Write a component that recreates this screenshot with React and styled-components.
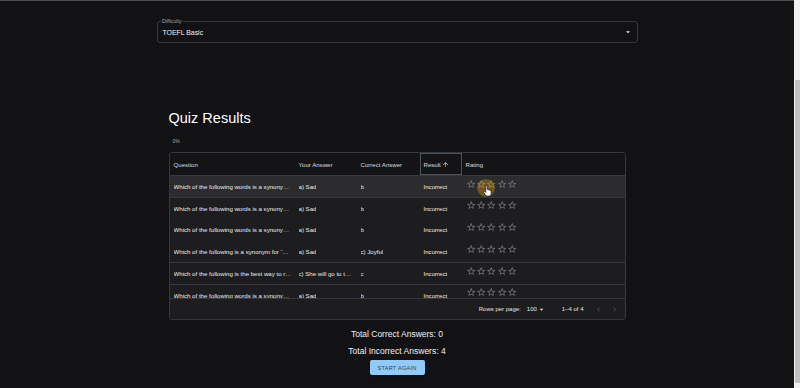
import React from "react";
import styled, { createGlobalStyle } from "styled-components";

const GlobalStyle = createGlobalStyle`
  html, body {
    margin: 0;
    background: #121114;
    color: #fff;
    font-family: "Liberation Sans", Arial, sans-serif;
    overflow: hidden;
  }
`;

const Page = styled.div`
  height: 388px;
  box-sizing: border-box;
  padding-right: 6px;
  border-top: 1px solid #4d4c4f;
`;

const Scrollbar = styled.div`
  position: fixed;
  top: 0;
  right: 0;
  width: 6px;
  height: 388px;
  background: #f1f1f1;
`;

const Thumb = styled.div`
  position: absolute;
  top: 80px;
  left: 0.5px;
  width: 5px;
  height: 303px;
  background: #c1c1c1;
`;

const Container = styled.div`
  width: 481px;
  margin: 0 auto;
  padding: 20px 0 0;
`;

const Field = styled.div`
  position: relative;
  height: 22px;
  box-sizing: border-box;
  border: 1px solid #39383b;
  border-radius: 3px;
  display: flex;
  align-items: center;
  justify-content: space-between;
  padding: 0 4px 0 5px;
  font-size: 6.9px;
  color: #f2f2f2;
`;

const FieldLabel = styled.span`
  position: absolute;
  top: -4px;
  left: 3px;
  padding: 0 1.5px;
  background: #121114;
  font-size: 5.2px;
  line-height: 6px;
  color: #a3a3a6;
`;

const Section = styled.div`
  padding: 0 12px;
`;

const Title = styled.h1`
  margin: 68px 0 10.5px;
  font-size: 14.5px;
  line-height: 1;
  font-weight: 400;
  color: #fff;
`;

const Progress = styled.div`
  height: 10px;
  margin-bottom: 6px;
  padding-left: 4px;
  display: flex;
  align-items: center;
  font-size: 5px;
  color: #a9a9ac;
`;

const Grid = styled.div`
  border: 1px solid #38373a;
  border-radius: 3px;
  overflow: hidden;
`;

const Row = styled.div`
  display: grid;
  grid-template-columns: 125px 62px 63px 42px 1fr;
  box-sizing: border-box;
  height: ${(p) => (p.$header ? "23px" : "21.75px")};
  background: ${(p) => (p.$header ? "#141316" : p.$hover ? "#2c2b2e" : "#1d1c1f")};
  border-bottom: 1px solid ${(p) => (p.$header || p.$lined ? "#38373a" : "transparent")};
  font-size: 6.1px;
  color: ${(p) => (p.$header ? "#dcdcdf" : "#ececee")};
`;

const Cell = styled.div`
  position: relative;
  display: flex;
  align-items: ${(p) => (p.$top ? "flex-start" : "center")};
  padding: ${(p) => (p.$top ? "2.5px 4px 0" : "0 3px 0 4px")};
  min-width: 0;
  white-space: nowrap;
  outline: ${(p) => (p.$focus ? "1px solid #4a545e" : "none")};
  outline-offset: -1px;
`;

const Clip = styled.span`
  overflow: hidden;
  text-overflow: ellipsis;
`;

const Body = styled.div`
  height: 122px;
  overflow: hidden;
`;

const Stars = styled.div`
  display: flex;
`;

const Ripple = styled.span`
  position: absolute;
  left: 15px;
  top: 3px;
  width: 18px;
  height: 18px;
  border-radius: 50%;
  background: rgba(250, 175, 0, 0.32);
`;

const Pointer = styled.svg`
  position: absolute;
  left: 21px;
  top: 9px;
  width: 9px;
  height: 12px;
`;

const Footer = styled.div`
  height: 21px;
  box-sizing: border-box;
  border-top: 1px solid #38373a;
  background: #1d1c1f;
  display: flex;
  align-items: center;
  justify-content: flex-end;
  padding-right: 5px;
  font-size: 6px;
  color: #e4e4e6;
`;

const FooterText = styled.span`
  margin-right: ${(p) => p.$gap || 0}px;
  display: flex;
  align-items: center;
`;

const PageButton = styled.span`
  width: 10px;
  margin-left: ${(p) => p.$gap}px;
  display: flex;
  justify-content: center;
  color: ${(p) => (p.$disabled ? "#4e4d51" : "#8e8e92")};
`;

const Total = styled.div`
  margin-top: ${(p) => p.$gap}px;
  height: 14px;
  line-height: 14px;
  text-align: center;
  font-size: 8.5px;
  color: #f0f0f0;
`;

const Actions = styled.div`
  display: flex;
  justify-content: center;
  margin-top: 2px;
`;

const Button = styled.button`
  width: 55px;
  height: 15px;
  padding: 0;
  border: none;
  border-radius: 2px;
  background: #90caf9;
  color: rgba(0, 0, 0, 0.72);
  font-family: inherit;
  font-size: 5.6px;
  letter-spacing: 0.25px;
  box-shadow: 0 1px 2px rgba(0, 0, 0, 0.5);
`;

const Icon = ({ d, size, color = "currentColor" }) => (
  <svg width={size} height={size} viewBox="0 0 24 24" fill={color}>
    <path d={d} />
  </svg>
);

const STAR =
  "M22 9.24l-7.19-.62L12 2 9.19 8.63 2 9.24l5.46 4.73L5.82 21 12 17.27 18.18 21l-1.63-7.03L22 9.24zM12 15.4l-3.76 2.27 1-4.28-3.32-2.88 4.38-.38L12 6.1l1.71 4.04 4.38.38-3.32 2.88 1 4.28L12 15.4z";
const DROP = "M7 10l5 5 5-5z";
const UP = "M4 12l1.41 1.41L11 7.83V20h2V7.83l5.58 5.59L20 12l-8-8-8 8z";
const LEFT = "M15.41 7.41 14 6l-6 6 6 6 1.41-1.41L10.83 12z";
const RIGHT = "M10 6 8.59 7.41 13.17 12l-4.58 4.59L10 18l6-6z";

const synonymQ = "Which of the following words is a synonym for \u201Cmelancholy\u201D?";

const rows = [
  { q: synonymQ, your: "a) Sad", correct: "b" },
  { q: synonymQ, your: "a) Sad", correct: "b" },
  { q: synonymQ, your: "a) Sad", correct: "b" },
  { q: "Which of the following is a synonym for \u201Chappy\u201D?", your: "a) Sad", correct: "c) Joyful" },
  { q: "Which of the following is the best way to rewrite the sentence?", your: "c) She will go to the store tomorrow.", correct: "c" },
  { q: synonymQ, your: "a) Sad", correct: "b" },
];

const Rating = ({ active }) => (
  <Cell $top>
    {active && <Ripple />}
    <Stars>
      {[0, 1, 2, 3, 4].map((i) => (
        <Icon key={i} d={STAR} size={10.4} color="#78777b" />
      ))}
    </Stars>
    {active && (
      <Pointer viewBox="0 0 16 20">
        <path
          d="M5 1.4a1.2 1.2 0 0 1 2.4 0v6.2a1.2 1.2 0 0 1 2.4.2v.6a1.2 1.2 0 0 1 2.3.4v.6a1.1 1.1 0 0 1 2.2.4v4.6c0 2.5-1.6 4.4-3.6 4.4H7.4c-1.5 0-2.4-.8-3.2-2L1.3 12.2a1.2 1.2 0 0 1 1.9-1.4L5 12.6z"
          fill="#fff"
          stroke="#000"
          strokeWidth="0.9"
        />
      </Pointer>
    )}
  </Cell>
);

const App = () => (
  <>
    <GlobalStyle />
    <Page>
      <Container>
        <Field>
          <FieldLabel>Difficulty</FieldLabel>
          <span>TOEFL Basic</span>
          <Icon d={DROP} size={10} color="#e6e6e6" />
        </Field>
        <Section>
          <Title>Quiz Results</Title>
          <Progress>0%</Progress>
          <Grid>
            <Row $header>
              <Cell>Question</Cell>
              <Cell>Your Answer</Cell>
              <Cell>Correct Answer</Cell>
              <Cell $focus>
                Result&nbsp;
                <Icon d={UP} size={7} color="#e6e6e6" />
              </Cell>
              <Cell>Rating</Cell>
            </Row>
            <Body>
              {rows.map((r, i) => (
                <Row key={i} $hover={i === 0} $lined={i === 0 || i >= 3}>
                  <Cell>
                    <Clip>{r.q}</Clip>
                  </Cell>
                  <Cell>
                    <Clip>{r.your}</Clip>
                  </Cell>
                  <Cell>
                    <Clip>{r.correct}</Clip>
                  </Cell>
                  <Cell>Incorrect</Cell>
                  <Rating active={i === 0} />
                </Row>
              ))}
            </Body>
            <Footer>
              <FooterText $gap={6}>Rows per page:</FooterText>
              <FooterText $gap={16}>
                100
                <Icon d={DROP} size={9} color="#e6e6e6" />
              </FooterText>
              <FooterText>1–4 of 4</FooterText>
              <PageButton $gap={10} $disabled>
                <Icon d={LEFT} size={9} />
              </PageButton>
              <PageButton $gap={6} $disabled>
                <Icon d={RIGHT} size={9} />
              </PageButton>
            </Footer>
          </Grid>
        </Section>
        <Total $gap={7}>Total Correct Answers: 0</Total>
        <Total $gap={3}>Total Incorrect Answers: 4</Total>
        <Actions>
          <Button>START AGAIN</Button>
        </Actions>
      </Container>
      <Scrollbar>
        <Thumb />
      </Scrollbar>
    </Page>
  </>
);

export default App;
